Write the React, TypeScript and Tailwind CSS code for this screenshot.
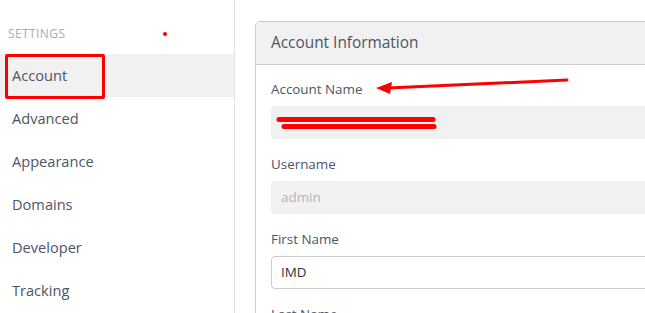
import React from 'react';

const NAV_ITEMS = ['Account', 'Advanced', 'Appearance', 'Domains', 'Developer', 'Tracking'];

const FIELDS = [
  { label: 'Account Name', value: '', kind: 'redacted' },
  { label: 'Username', value: 'admin', kind: 'disabled' },
  { label: 'First Name', value: 'IMD', kind: 'input' },
  { label: 'Last Name', value: '', kind: 'input' },
];

export default function App() {
  return (
    <div
      className="relative flex h-[313px] w-[645px] overflow-hidden bg-white"
      style={{ fontFamily: '"Open Sans", "Noto Sans", sans-serif' }}
    >
      {/* Sidebar */}
      <aside className="w-[235px] shrink-0 border-r border-[#e3e3e3] bg-white pt-[26px]">
        <div className="mb-[12px] h-[16px] pl-[8px] text-[12px] leading-[16px] tracking-[0.4px] text-[#ababab] uppercase">
          Settings
        </div>
        {NAV_ITEMS.map((item, idx) => (
          <div
            key={item}
            className={
              'flex h-[43px] items-center pl-[12px] text-[14.6px] text-[#4c5566] ' +
              (idx === 0 ? 'bg-[#f1f1f1]' : '')
            }
          >
            {item}
          </div>
        ))}
      </aside>

      {/* Main */}
      <main className="flex-1 overflow-hidden pt-[21px] pl-[20px]">
        <div className="w-[520px] rounded-[5px] border border-[#cccccc]">
          <div className="flex h-[43px] items-center rounded-t-[5px] border-b border-[#cccccc] bg-[#f1f1f1] px-[15px] text-[15.4px] text-[#4c5566]">
            Account Information
          </div>
          <div className="px-[15px] pt-[14px]">
            {FIELDS.map((f) => (
              <div key={f.label} className="mb-[15px]">
                <div className="mb-[7px] text-[13.4px] leading-[20px] text-[#4c5566]">{f.label}</div>
                {f.kind === 'input' ? (
                  <div className="flex h-[33px] items-center rounded-[4px] border border-[#cccccc] bg-white px-[9px] text-[13.4px] text-[#333333]">
                    {f.value}
                  </div>
                ) : (
                  <div className="flex h-[33px] items-center rounded-[4px] bg-[#f1f1f1] px-[10px] text-[13.4px] text-[#b4b4b4]">
                    {f.value}
                  </div>
                )}
              </div>
            ))}
          </div>
        </div>
      </main>

      {/* Annotations */}
      <div className="pointer-events-none absolute top-[54px] left-[5px] h-[45px] w-[100px] rounded-[2px] border-[3px] border-[#ff0000]" />
      <div className="pointer-events-none absolute top-[32px] left-[163px] h-[4px] w-[4px] rounded-full bg-[#ff0000]" />
      <svg className="pointer-events-none absolute top-0 left-0" width="645" height="313" viewBox="0 0 645 313">
        <line x1="567" y1="80" x2="388" y2="88" stroke="#ff0000" strokeWidth="3" strokeLinecap="round" />
        <polygon points="376,88 392,82 390,94" fill="#ff0000" />
        <line x1="279" y1="119.5" x2="433" y2="119.5" stroke="#ff0000" strokeWidth="5" strokeLinecap="round" />
        <line x1="284" y1="126.5" x2="434" y2="126.5" stroke="#ff0000" strokeWidth="5" strokeLinecap="round" />
      </svg>
    </div>
  );
}
